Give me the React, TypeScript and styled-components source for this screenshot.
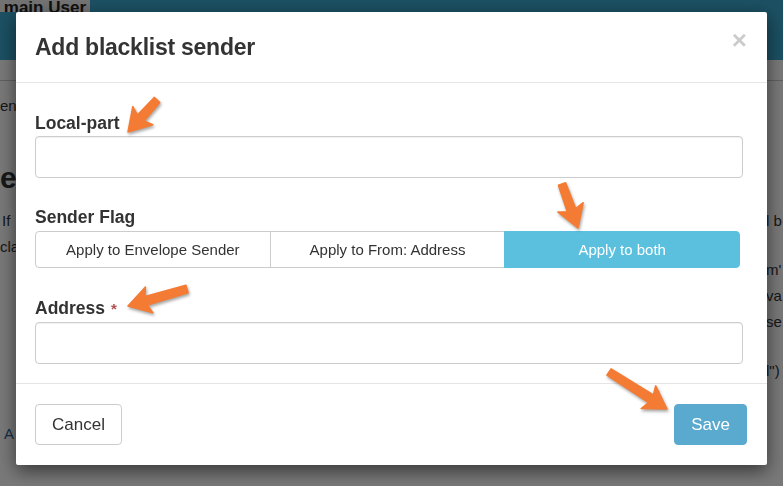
import React from "react";
import styled, { createGlobalStyle } from "styled-components";

const Global = createGlobalStyle`
  html, body { margin: 0; padding: 0; }
  body {
    width: 783px;
    height: 486px;
    overflow: hidden;
    font-family: "Liberation Sans", Arial, sans-serif;
    background: #fff;
  }
`;

/* ---------- background page ---------- */
const Page = styled.div`
  width: 783px;
  height: 486px;
  display: flex;
  flex-direction: column;
  overflow: hidden;
`;

const TopBar = styled.div`
  height: 60px;
  background: #3aa9cf;
  display: flex;
  align-items: flex-start;
`;

const Tab = styled.div`
  width: 90px;
  height: 12px;
  background: #f2f2f2;
  color: #222;
  font-weight: bold;
  font-size: 17px;
  line-height: 8px;
  overflow: hidden;
  display: flex;
  align-items: flex-end;
  justify-content: flex-end;
  padding-right: 4px;
  box-sizing: border-box;
`;

const SubBar = styled.div`
  height: 20px;
  border-bottom: 1px solid #ccc;
`;

const Columns = styled.div`
  flex: 1;
  display: flex;
  justify-content: space-between;
`;

const LeftCol = styled.div`
  width: 30px;
  overflow: hidden;
  color: #333;
  font-size: 15px;
  white-space: nowrap;
  display: flex;
  flex-direction: column;
`;

const RightCol = styled.div`
  width: 17px;
  overflow: hidden;
  color: #333;
  font-size: 15px;
  white-space: nowrap;
  display: flex;
  flex-direction: column;
`;

const Line = styled.div<{ $mt: number; $size?: number; $bold?: boolean; $color?: string; $pl?: number }>`
  margin-top: ${(p) => p.$mt}px;
  padding-left: ${(p) => p.$pl ?? 0}px;
  font-size: ${(p) => p.$size ?? 15}px;
  font-weight: ${(p) => (p.$bold ? "bold" : "normal")};
  color: ${(p) => p.$color ?? "#333"};
  line-height: 18px;
`;

/* ---------- overlay & modal ---------- */
const Backdrop = styled.div`
  position: fixed;
  inset: 0;
  background: rgba(0, 0, 0, 0.53);
  display: flex;
  align-items: flex-start;
  justify-content: flex-start;
`;

const Modal = styled.div`
  margin: 12px 0 0 16px;
  width: 751px;
  height: 453px;
  background: #fff;
  border-radius: 2px;
  box-shadow: 0 6px 18px rgba(0, 0, 0, 0.55);
  display: flex;
  flex-direction: column;
  color: #333;
`;

const Header = styled.div`
  height: 70px;
  border-bottom: 1px solid #e5e5e5;
  display: flex;
  align-items: center;
  justify-content: space-between;
  padding: 0 22px 0 19px;
`;

const Title = styled.h4`
  margin: 0;
  font-size: 23px;
  font-weight: bold;
  color: #333;
  letter-spacing: -0.25px;
`;

const Close = styled.span`
  font-size: 26px;
  font-weight: bold;
  color: #000;
  opacity: 0.2;
  line-height: 1;
  margin-top: -14px;
  margin-right: -2px;
`;

const Body = styled.div`
  padding: 30px 24px 19px 19px;
  display: flex;
  flex-direction: column;
  border-bottom: 1px solid #e5e5e5;
`;

const Field = styled.div<{ $mt?: number }>`
  display: flex;
  flex-direction: column;
  margin-top: ${(p) => p.$mt ?? 0}px;
`;

const Label = styled.label`
  font-size: 17.5px;
  font-weight: bold;
  color: #333;
  line-height: 20px;
  margin-bottom: 3px;
`;

const Req = styled.span`
  color: #b05050;
  font-size: 15px;
  margin-left: 6px;
`;

const Input = styled.input`
  height: 42px;
  border: 1px solid #ccc;
  border-radius: 4px;
  box-sizing: border-box;
  box-shadow: inset 0 1px 1px rgba(0, 0, 0, 0.06);
  font-family: inherit;
  font-size: 15px;
`;

const Group = styled.div`
  display: flex;
  margin-right: 3px;
  margin-top: 1px;
`;

const GroupBtn = styled.button<{ $active?: boolean; $pos: "first" | "mid" | "last" }>`
  flex: 1;
  height: 37px;
  font-family: inherit;
  font-size: 15px;
  color: ${(p) => (p.$active ? "#fff" : "#333")};
  background: ${(p) => (p.$active ? "#5bc0de" : "#fff")};
  border: 1px solid ${(p) => (p.$active ? "#5bc0de" : "#ccc")};
  margin-left: ${(p) => (p.$pos === "first" ? 0 : -1)}px;
  border-radius: ${(p) =>
    p.$pos === "first" ? "4px 0 0 4px" : p.$pos === "last" ? "0 4px 4px 0" : "0"};
  padding: 0;
`;

const Footer = styled.div`
  flex: 1;
  display: flex;
  align-items: flex-start;
  justify-content: space-between;
  padding: 20px 20px 0 19px;
`;

const Btn = styled.button<{ $primary?: boolean }>`
  height: 41px;
  padding: 0 16px;
  font-family: inherit;
  font-size: 17px;
  border-radius: 4px;
  color: ${(p) => (p.$primary ? "#fff" : "#333")};
  background: ${(p) => (p.$primary ? "#5aa9cf" : "#fff")};
  border: 1px solid ${(p) => (p.$primary ? "#5aa9cf" : "#ccc")};
`;

const Arrows = styled.svg`
  position: fixed;
  left: 0;
  top: 0;
  width: 783px;
  height: 486px;
  pointer-events: none;
  filter: drop-shadow(1px 2px 1.5px rgba(0, 0, 0, 0.35));
`;

type Pt = [number, number];

function arrowPath(tail: Pt, tip: Pt, headLen = 22, headW = 27, shaftW = 9) {
  const dx = tip[0] - tail[0];
  const dy = tip[1] - tail[1];
  const len = Math.hypot(dx, dy);
  const ux = dx / len;
  const uy = dy / len;
  const nx = -uy;
  const ny = ux;
  const bx = tip[0] - ux * headLen;
  const by = tip[1] - uy * headLen;
  const hw = headW / 2;
  const sw = shaftW / 2;
  const p = (x: number, y: number) => `${x.toFixed(1)},${y.toFixed(1)}`;
  return [
    `M${p(tail[0] + nx * sw * 0.85, tail[1] + ny * sw * 0.85)}`,
    `L${p(bx + ux * 3 + nx * sw, by + uy * 3 + ny * sw)}`,
    `L${p(bx + nx * hw, by + ny * hw)}`,
    `L${p(tip[0], tip[1])}`,
    `L${p(bx - nx * hw, by - ny * hw)}`,
    `L${p(bx + ux * 3 - nx * sw, by + uy * 3 - ny * sw)}`,
    `L${p(tail[0] - nx * sw * 0.85, tail[1] - ny * sw * 0.85)}`,
    "Z",
  ].join(" ");
}

const arrows: [Pt, Pt][] = [
  [[157, 100], [128, 132]],
  [[562, 184], [578, 228]],
  [[187, 289], [128, 306]],
  [[609, 372], [667, 409]],
];

export default function App() {
  return (
    <>
      <Global />
      <Page>
        <TopBar>
          <Tab>main User</Tab>
        </TopBar>
        <SubBar />
        <Columns>
          <LeftCol>
            <Line $mt={16}>ender</Line>
            <Line $mt={54} $size={30} $bold>
              e
            </Line>
            <Line $mt={25} $pl={2}>
              If
            </Line>
            <Line $mt={8}>cla</Line>
            <Line $mt={169} $color="#2a6496" $pl={4}>
              A
            </Line>
          </LeftCol>
          <RightCol>
            <Line $mt={131}>l b</Line>
            <Line $mt={31}>m'</Line>
            <Line $mt={8}>va</Line>
            <Line $mt={8}>se</Line>
            <Line $mt={31}>l")</Line>
          </RightCol>
        </Columns>
      </Page>
      <Backdrop>
        <Modal>
          <Header>
            <Title>Add blacklist sender</Title>
            <Close>×</Close>
          </Header>
          <Body>
            <Field>
              <Label>Local-part</Label>
              <Input />
            </Field>
            <Field $mt={29}>
              <Label>Sender Flag</Label>
              <Group>
                <GroupBtn $pos="first">Apply to Envelope Sender</GroupBtn>
                <GroupBtn $pos="mid">Apply to From: Address</GroupBtn>
                <GroupBtn $pos="last" $active>
                  Apply to both
                </GroupBtn>
              </Group>
            </Field>
            <Field $mt={30}>
              <Label>
                Address<Req>*</Req>
              </Label>
              <Input />
            </Field>
          </Body>
          <Footer>
            <Btn>Cancel</Btn>
            <Btn $primary>Save</Btn>
          </Footer>
        </Modal>
      </Backdrop>
      <Arrows viewBox="0 0 783 486">
        {arrows.map(([t, h], i) => (
          <path
            key={i}
            d={arrowPath(t, h)}
            fill="#f47b34"
            strokeLinejoin="round"
            stroke="#f47b34"
            strokeWidth={1.5}
          />
        ))}
      </Arrows>
    </>
  );
}
